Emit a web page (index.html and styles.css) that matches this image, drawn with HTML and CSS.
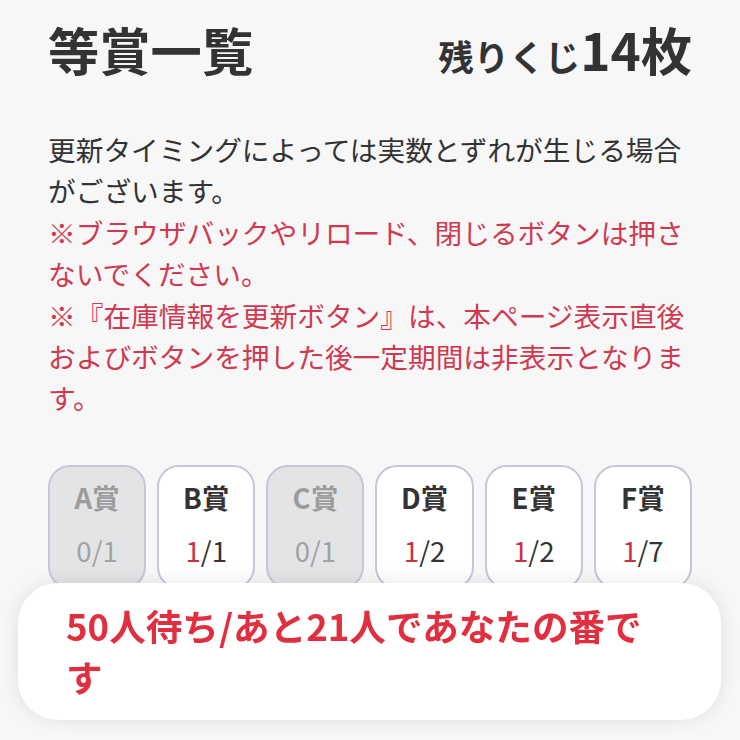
FILE: index.html
```html
<!DOCTYPE html>
<html lang="ja">
<head>
<meta charset="utf-8">
<title>等賞一覧</title>
<link rel="stylesheet" href="styles.css">
</head>
<body>
<main class="page">
  <header class="head">
    <h1 class="title">等賞一覧</h1>
    <div class="remain"><span class="remain-label">残りくじ</span><span class="remain-num">14枚</span></div>
  </header>
  <section class="notes">
    <p class="note">更新タイミングによっては実数とずれが生じる場合がございます。</p>
    <p class="note warn">※ブラウザバックやリロード、閉じるボタンは押さないでください。</p>
    <p class="note warn">※『在庫情報を更新ボタン』は、本ページ表示直後およびボタンを押した後一定期間は非表示となります。</p>
  </section>
  <ul class="prizes">
    <li class="prize off"><span class="p-name">A賞</span><span class="p-count"><span class="p-left">0</span>/1</span></li>
    <li class="prize"><span class="p-name">B賞</span><span class="p-count"><span class="p-left">1</span>/1</span></li>
    <li class="prize off"><span class="p-name">C賞</span><span class="p-count"><span class="p-left">0</span>/1</span></li>
    <li class="prize"><span class="p-name">D賞</span><span class="p-count"><span class="p-left">1</span>/2</span></li>
    <li class="prize"><span class="p-name">E賞</span><span class="p-count"><span class="p-left">1</span>/2</span></li>
    <li class="prize"><span class="p-name">F賞</span><span class="p-count"><span class="p-left">1</span>/7</span></li>
  </ul>
</main>
<div class="queue">
  <p class="queue-text">50人待ち/あと21人であなたの番です</p>
</div>
</body>
</html>
```
FILE: styles.css
```css
html, body {
  margin: 0;
  padding: 0;
  background: #f7f7f7;
}
body {
  font-family: "Noto Sans CJK JP", "Noto Sans", sans-serif;
  color: #333333;
  height: 740px;
  overflow: hidden;
}
.page {
  padding: 19px 48px 0 48px;
}
.head {
  display: flex;
  justify-content: space-between;
  align-items: baseline;
}
.title {
  margin: 0;
  font-size: 51.3px;
  line-height: 60px;
  font-weight: 700;
  color: #333333;
}
.remain {
  font-weight: 700;
  color: #333333;
}
.remain-label {
  font-size: 35.5px;
}
.remain-num {
  font-size: 51.3px;
  line-height: 60px;
}
.notes {
  margin-top: 48px;
}
.note {
  margin: 0;
  font-size: 27.7px;
  line-height: 41.4px;
  color: #333333;
}
.note.warn {
  color: #cf3a50;
}
.prizes {
  list-style: none;
  margin: 46px 0 0 0;
  padding: 0;
  display: grid;
  grid-template-columns: repeat(6, 1fr);
  gap: 11px;
}
.prize {
  box-sizing: border-box;
  height: 124px;
  border: 2px solid #c6c6d8;
  border-radius: 22px;
  background: #ffffff;
  display: flex;
  flex-direction: column;
  align-items: center;
  padding-top: 10px;
  gap: 12px;
}
.prize.off {
  background: #e4e4e6;
}
.p-name {
  font-size: 27.6px;
  line-height: 41px;
  font-weight: 700;
  color: #333333;
}
.p-count {
  font-size: 27.6px;
  line-height: 41px;
  color: #333333;
}
.p-left {
  color: #c83246;
}
.prize.off .p-name {
  color: #9c9c9c;
}
.prize.off .p-count,
.prize.off .p-left {
  color: #a2a2a2;
}
.queue {
  position: fixed;
  left: 18px;
  right: 19px;
  bottom: 20px;
  box-sizing: border-box;
  height: 137px;
  background: #ffffff;
  border-radius: 40px;
  box-shadow: 0 0 18px rgba(0, 0, 0, 0.10);
  padding: 17px 52px 0 48px;
}
.queue-text {
  margin: 0;
  font-size: 36.6px;
  line-height: 51.3px;
  font-weight: 700;
  color: #e0303f;
}
```
